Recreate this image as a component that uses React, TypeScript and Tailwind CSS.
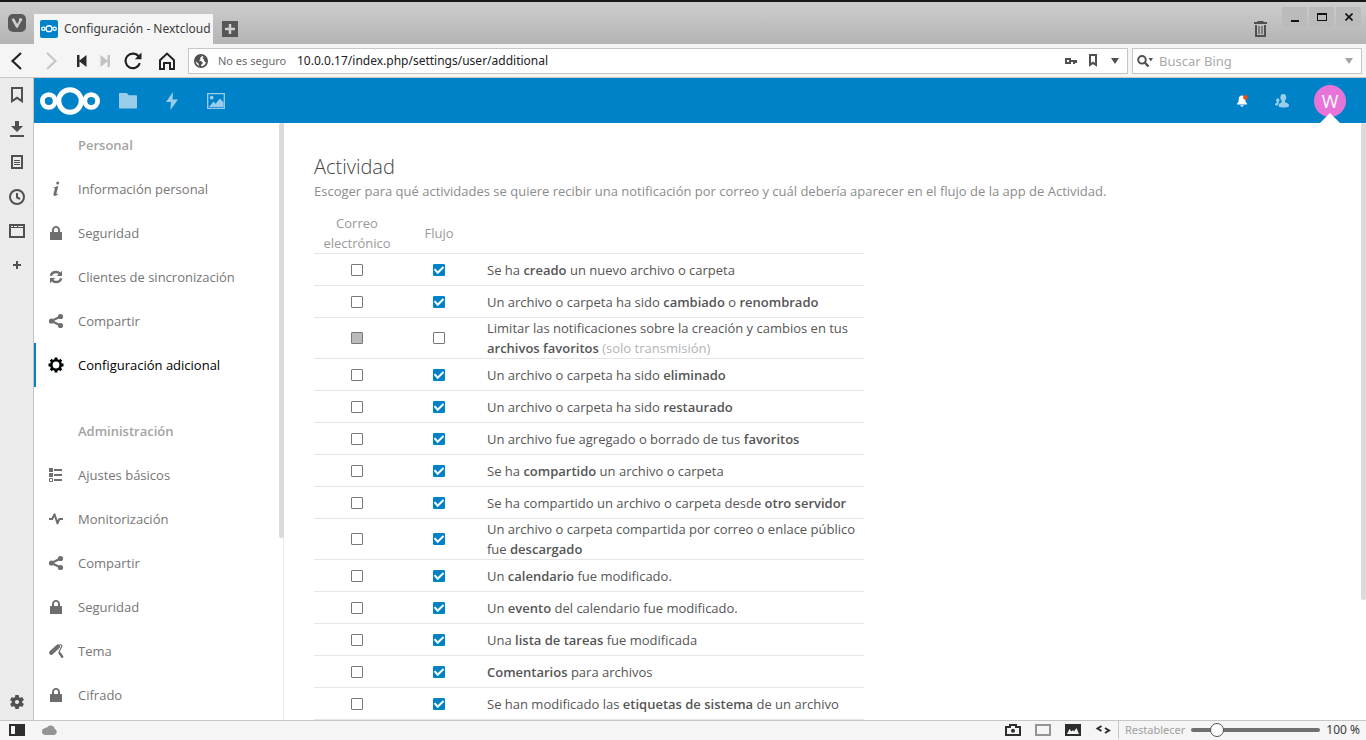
import React, { useState } from "react";

type IconProps = { className?: string };

function VivaldiIcon() {
  return (
    <svg className="size-[18px]" viewBox="0 0 18 18">
      <rect width="18" height="18" rx="5" fill="#5a5a5a" />
      <path d="M5.200 5.600 9 12.400" stroke="#cfcfcf" strokeWidth="2.600" strokeLinecap="round" />
      <path d="M9 12.400 12.200 7" stroke="#cfcfcf" strokeWidth="2.200" strokeLinecap="round" />
      <circle cx="12.600" cy="5.800" r="1.700" fill="#cfcfcf" />
    </svg>
  );
}

function NextcloudLogo({ className }: IconProps) {
  return (
    <svg className={className} viewBox="0 0 60 28" fill="none" stroke="#fff">
      <circle cx="30" cy="14" r="11.2" strokeWidth="5" />
      <circle cx="8.800" cy="14" r="6.400" strokeWidth="4.800" />
      <circle cx="51.200" cy="14" r="6.400" strokeWidth="4.800" />
    </svg>
  );
}

function BackIcon() {
  return (
    <svg className="size-[18px]" viewBox="0 0 18 18" fill="none" stroke="#222" strokeWidth="2.2">
      <path d="M13 1 4.5 9l8.5 8" />
    </svg>
  );
}
function ForwardIcon() {
  return (
    <svg className="size-[18px]" viewBox="0 0 18 18" fill="none" stroke="#c6c6c6" strokeWidth="2.2">
      <path d="m5 1 8.500 8L5 17" />
    </svg>
  );
}
function RewindIcon() {
  return (
    <svg className="h-3 w-[10px]" viewBox="0 0 10 12" fill="#2a2a2a">
      <path d="M0 0h2.500v5.500L9.500 0v12L2.500 6.500V12H0z" />
    </svg>
  );
}
function FastForwardIcon() {
  return (
    <svg className="h-3 w-[10px]" viewBox="0 0 10 12" fill="#c2c2c2">
      <path d="M10 0H7.500v5.500L.5 0v12l7-5.500V12H10z" />
    </svg>
  );
}
function ReloadIcon() {
  return (
    <svg className="size-[18px]" viewBox="0 0 18 18" fill="none">
      <path d="M15.800 11.200A7.300 7.300 0 1 1 14.600 4.300" stroke="#222" strokeWidth="2.200" />
      <path d="M17.500.5v6.700h-6.700z" fill="#222" />
    </svg>
  );
}
function HomeIcon() {
  return (
    <svg className="size-[18px]" viewBox="0 0 18 18" fill="none" stroke="#222" strokeWidth="2">
      <path d="M2 17V8.200L9 1.600l7 6.600V17h-4v-6H6v6z" />
    </svg>
  );
}
function GlobeIcon() {
  return (
    <svg className="size-[14px]" viewBox="0 0 14 14">
      <circle cx="7" cy="7" r="6.100" fill="#fff" stroke="#505050" strokeWidth="1.800" />
      <path fill="#505050" d="M1 5.500 3.500 2 7 1.200l.8 1.500L5.800 4l1 1.200L4.800 6.600l2.600.6 1.600 1.900-1.600 1.500-.6 2.600-1.600-1-.8-2.700L1.500 7zM9.500 2.200 12.600 5l.4 3-1.600.3L10 6.800 9.800 5l-1.300-.8z" />
    </svg>
  );
}
function KeyIcon() {
  return (
    <svg className="h-2 w-3" viewBox="0 0 12 8" fill="none" stroke="#505050" strokeWidth="2">
      <path d="M1 2h4v4H1zM5 4h7M9 4v3M11 4v2" />
    </svg>
  );
}
function RibbonIcon({ className }: IconProps) {
  return (
    <svg className={className} viewBox="0 0 12 16" fill="none" stroke="#505050" strokeWidth="2">
      <path d="M1 1h10v13.200L6 10.800l-5 3.400z" />
    </svg>
  );
}
function SmallRibbonIcon() {
  return (
    <svg className="h-[13px] w-2" viewBox="0 0 8 13" fill="none" stroke="#505050" strokeWidth="2">
      <path d="M1 1h6v9.800L4 8.800l-3 2z" />
    </svg>
  );
}
function DownTriangle({ className }: IconProps) {
  return (
    <svg className={className} viewBox="0 0 8 6" fill="currentColor">
      <path d="M0 0h8L4 6z" />
    </svg>
  );
}
function MagnifierIcon() {
  return (
    <svg className="h-3 w-4" viewBox="0 0 16 12" fill="none">
      <circle cx="5" cy="4.800" r="3.800" stroke="#505050" strokeWidth="2" />
      <path d="m7.800 7.500 3.700 4" stroke="#505050" strokeWidth="2.400" />
      <path d="M11.500 3H16l-2.250 3.500z" fill="#505050" />
    </svg>
  );
}
function TrashIcon() {
  return (
    <svg className="h-4 w-[13px]" viewBox="0 0 13 16">
      <path fill="#505050" d="M3.500 0h6v1H13v2H0V1h3.500z" />
      <path fill="none" stroke="#505050" strokeWidth="2" d="M2 4v11h9V4" />
      <path fill="none" stroke="#6b6b6b" strokeWidth="1.500" d="M5 5v8M8 5v8" />
    </svg>
  );
}

function DownloadIcon() {
  return (
    <svg className="size-4" viewBox="0 0 16 16" fill="#505050">
      <path d="M6 0h4v5h4L8 11 2 5h4zM1 14h14v2H1z" />
    </svg>
  );
}
function NotesIcon() {
  return (
    <svg className="size-4" viewBox="0 0 16 16" fill="none" stroke="#505050">
      <path strokeWidth="2" d="M3 1h10v12H3z" />
      <path d="M2 1.500h12M5 5.500h6M5 7.500h6M5 9.500h6" />
    </svg>
  );
}
function ClockIcon() {
  return (
    <svg className="size-4" viewBox="0 0 16 16" fill="none" stroke="#505050" strokeWidth="2">
      <circle cx="8" cy="8" r="7" />
      <path d="M8 4v4.500l3 1.500" />
    </svg>
  );
}
function WindowIcon() {
  return (
    <svg className="size-4" viewBox="0 0 16 16" fill="none" stroke="#505050">
      <path strokeWidth="2" d="M1 2h14v12H1z" />
      <path d="M1 4.500h14M4.500 2v2M8.500 2v2" />
    </svg>
  );
}
function PlusIcon({ className }: IconProps) {
  return (
    <svg className={className} viewBox="0 0 8 8" fill="none" stroke="currentColor" strokeWidth="2">
      <path d="M4 0v8M0 4h8" />
    </svg>
  );
}
function CogIcon() {
  return (
    <svg className="size-[14px]" viewBox="2 2 20 20" fill="#505050">
      <path d="M19.430 12.980c.04-.32.07-.64.07-.98s-.03-.66-.07-.98l2.110-1.650c.19-.15.24-.42.12-.64l-2-3.460c-.12-.22-.39-.3-.61-.22l-2.490 1c-.52-.4-1.080-.73-1.690-.98l-.38-2.650C14.460 2.180 14.250 2 14 2h-4c-.25 0-.46.18-.49.42l-.38 2.650c-.61.25-1.170.59-1.690.98l-2.490-1c-.23-.09-.49 0-.61.22l-2 3.460c-.13.22-.07.49.12.64l2.110 1.650c-.04.32-.07.65-.07.98s.03.66.07.98l-2.110 1.650c-.19.15-.24.42-.12.64l2 3.460c.12.22.39.3.61.22l2.490-1c.52.4 1.080.73 1.690.98l.38 2.650c.03.24.24.42.49.42h4c.25 0 .46-.18.49-.42l.38-2.650c.61-.25 1.170-.59 1.690-.98l2.490 1c.23.09.49 0 .61-.22l2-3.460c.12-.22.07-.49-.12-.64zM12 15a3 3 0 1 1 0-6 3 3 0 0 1 0 6z" />
    </svg>
  );
}

function FolderIcon() {
  return (
    <svg className="h-4 w-[18px]" viewBox="0 0 18 16" fill="#99cdea">
      <path d="M.6 0h7.200l2 2.200h7.600q.6 0 .6.600v12q0 .7-.7.700H.7q-.7 0-.7-.7V.6Q0 0 .6 0z" />
    </svg>
  );
}
function BoltIcon() {
  return (
    <svg className="h-[18px] w-3" viewBox="0 0 12 18" fill="#99cdea">
      <path d="M7 0 0 10h5l-.6 8L12 7.500H6.600z" />
    </svg>
  );
}
function GalleryIcon() {
  return (
    <svg className="h-4 w-[18px]" viewBox="0 0 18 16">
      <path fill="none" stroke="#99cdea" strokeWidth="1.300" d="M.7.700h16.600v14.600H.7z" />
      <circle cx="4.700" cy="4.600" r="1.900" fill="#99cdea" />
      <path fill="#99cdea" d="m2 14 4.500-5.500 2 2.300L13 5.500l3.500 4V14z" />
    </svg>
  );
}
function BellIcon() {
  return (
    <svg className="h-3 w-[11px]" viewBox="0 0 11 12">
      <path fill="#fff" d="M5 .5c2 0 3.300 1.400 3.300 3.300 0 3 .5 4 1.700 4.700v1H0v-1C1.200 7.800 1.700 6.800 1.700 3.800 1.700 2 3 .5 5 .5zM3.200 10.300h3.600c-.3 1.900-3.300 1.900-3.600 0z" />
      <circle cx="8.400" cy="2.400" r="2.300" fill="#eb4b16" />
    </svg>
  );
}
function ContactsIcon() {
  return (
    <svg className="h-[14px] w-[14px]" viewBox="0 0 14 14" fill="#99cdea">
      <ellipse cx="8.300" cy="3.400" rx="2.900" ry="3.400" />
      <path d="M6.600 5.500h3.400v2.700l3 1.300c1 .6 1.200 2.600.6 3.200-1 .9-8.700.9-9.600 0-.6-.6-.4-2.600.6-3.200l2-1.300z" />
      <ellipse cx="2.800" cy="6.300" rx="1.600" ry="2" />
      <path d="M2 7.500h1.800v1.400l.2.200c-.7.600-.9 1.600-.9 2.400-1.300 0-2.600-.1-3-.5-.3-.7 0-1.500.5-1.800L2 8.600z" />
    </svg>
  );
}

type NavIconName = "info" | "lock" | "sync" | "share" | "gear" | "list" | "pulse" | "theme";

function NavIcon({ name }: { name: NavIconName }) {
  if (name === "info")
    return (
      <svg className="size-4" viewBox="0 0 16 16" fill="#6e6e6e">
        <circle cx="9.700" cy="2" r="1.500" />
        <path d="M5.600 6.500Q7.800 5.700 10.400 4.800L8.400 12.800q-.1.900 1.800-.2l.1.700Q6 16.200 5.300 13.800L6.900 7.500q-.2-.8-1.500-.3z" />
      </svg>
    );
  if (name === "lock")
    return (
      <svg className="size-4" viewBox="0 0 16 16" fill="#6e6e6e">
        <path d="M8 1C5.700 1 4 2.800 4 5v2H2.700c-.4 0-.7.300-.7.700V15h12V7.700c0-.4-.3-.7-.7-.7H12V5c0-2.200-1.700-4-4-4zm0 1.800c1.200 0 2 1 2 2.200v2H6V5c0-1.200.8-2.200 2-2.200z" />
      </svg>
    );
  if (name === "sync")
    return (
      <svg className="size-4" viewBox="0 0 16 16">
        <path fill="none" stroke="#6e6e6e" strokeWidth="2.400" d="M2.800 6.800C3.400 4.500 5.500 3 8 3c1.700 0 3 .7 4 1.800M13.200 9.200C12.600 11.500 10.500 13 8 13c-1.700 0-3-.7-4-1.800" />
        <path fill="#6e6e6e" d="M14 1.800V7H8.800zM2 14.200V9h5.200z" />
      </svg>
    );
  if (name === "share")
    return (
      <svg className="size-4" viewBox="0 0 16 16">
        <g fill="#6e6e6e">
          <circle cx="12.500" cy="3.500" r="2.600" />
          <circle cx="3.500" cy="8" r="2.600" />
          <circle cx="12.500" cy="12.500" r="2.600" />
        </g>
        <path fill="none" stroke="#6e6e6e" strokeWidth="2.200" d="M12.500 3.500 3.500 8l9 4.500" />
      </svg>
    );
  if (name === "gear")
    return (
      <svg className="size-4" viewBox="0 0 16 16" fill="none" stroke="#000">
        <circle cx="8" cy="8" r="4.700" strokeWidth="2.600" />
        <path strokeWidth="2.800" d="M8 .5v2.500M8 13v2.500M.5 8H3M13 8h2.500M2.700 2.700l1.800 1.800M11.500 11.500l1.800 1.800M2.700 13.300l1.800-1.800M11.500 4.500l1.800-1.800" />
      </svg>
    );
  if (name === "list")
    return (
      <svg className="size-4" viewBox="0 0 16 16" fill="#6e6e6e">
        <path d="M1 1h4v4H1zM6 2h8v2H6zM1 6h4v4H1zM6 7h8v2H6zM6 12h8v2H6z" />
        <path fill="none" stroke="#6e6e6e" d="M1.500 11.500h3v3h-3z" />
      </svg>
    );
  if (name === "pulse")
    return (
      <svg className="size-4" viewBox="0 0 16 16" fill="none" stroke="#6e6e6e" strokeWidth="2" strokeLinejoin="round">
        <path d="M1 8h3.200l2.300-4.800 3 9.200L11.300 8H15" />
      </svg>
    );
  return (
    <svg className="size-4" viewBox="0 0 16 16" fill="none" stroke="#6e6e6e">
      <path strokeWidth="4.400" strokeLinecap="round" d="M3.300 9.700 10 3.500" />
      <path strokeWidth="1.200" d="M11.500 1.500c3 0 2.500 2 1.500 3.500s-2 3-1.500 4.500" />
      <path strokeWidth="2.400" strokeLinecap="round" d="m11.500 10 2.700 3.800" />
    </svg>
  );
}

type NavEntry = { label: string; icon: NavIconName; active?: boolean };

const personal: NavEntry[] = [
  { label: "Información personal", icon: "info" },
  { label: "Seguridad", icon: "lock" },
  { label: "Clientes de sincronización", icon: "sync" },
  { label: "Compartir", icon: "share" },
  { label: "Configuración adicional", icon: "gear", active: true },
];

const administration: NavEntry[] = [
  { label: "Ajustes básicos", icon: "list" },
  { label: "Monitorización", icon: "pulse" },
  { label: "Compartir", icon: "share" },
  { label: "Seguridad", icon: "lock" },
  { label: "Tema", icon: "theme" },
  { label: "Cifrado", icon: "lock" },
];

function NavSection({ title, entries }: { title: string; entries: NavEntry[] }) {
  return (
    <section>
      <h2 className="h-11 pl-11 leading-[44px] font-semibold text-[#a3a3a3]">{title}</h2>
      <ul>
        {entries.map((entry) => (
          <li key={entry.label}>
            <a
              href="#"
              className={
                entry.active
                  ? "flex h-11 items-center border-l-2 border-[#0082c9] pl-3 text-black"
                  : "flex h-11 items-center border-l-2 border-transparent pl-3 text-[#767676]"
              }
            >
              <span className="w-[30px] shrink-0">
                <NavIcon name={entry.icon} />
              </span>
              {entry.label}
            </a>
          </li>
        ))}
      </ul>
    </section>
  );
}

type Activity = { name: string; text: React.ReactNode; mail?: "disabled"; stream: boolean };

const activities: Activity[] = [
  { name: "creado", text: <>Se ha <strong>creado</strong> un nuevo archivo o carpeta</>, stream: true },
  { name: "cambiado", text: <>Un archivo o carpeta ha sido <strong>cambiado</strong> o <strong>renombrado</strong></>, stream: true },
  {
    name: "favoritos-limite",
    text: <>Limitar las notificaciones sobre la creación y cambios en tus <strong>archivos favoritos</strong> <span className="text-[#b3b3b3]">(solo transmisión)</span></>,
    mail: "disabled",
    stream: false,
  },
  { name: "eliminado", text: <>Un archivo o carpeta ha sido <strong>eliminado</strong></>, stream: true },
  { name: "restaurado", text: <>Un archivo o carpeta ha sido <strong>restaurado</strong></>, stream: true },
  { name: "favoritos", text: <>Un archivo fue agregado o borrado de tus <strong>favoritos</strong></>, stream: true },
  { name: "compartido", text: <>Se ha <strong>compartido</strong> un archivo o carpeta</>, stream: true },
  { name: "servidor", text: <>Se ha compartido un archivo o carpeta desde <strong>otro servidor</strong></>, stream: true },
  { name: "descargado", text: <>Un archivo o carpeta compartida por correo o enlace público fue <strong>descargado</strong></>, stream: true },
  { name: "calendario", text: <>Un <strong>calendario</strong> fue modificado.</>, stream: true },
  { name: "evento", text: <>Un <strong>evento</strong> del calendario fue modificado.</>, stream: true },
  { name: "tareas", text: <>Una <strong>lista de tareas</strong> fue modificada</>, stream: true },
  { name: "comentarios", text: <><strong>Comentarios</strong> para archivos</>, stream: true },
  { name: "etiquetas", text: <>Se han modificado las <strong>etiquetas de sistema</strong> de un archivo</>, stream: true },
];

function Tick({ labelledBy, initial, disabled }: { labelledBy: string; initial: boolean; disabled?: boolean }) {
  const [checked, setChecked] = useState(initial);
  return (
    <span className="mx-auto grid size-3">
      <input
        type="checkbox"
        aria-labelledby={labelledBy}
        disabled={disabled}
        checked={checked}
        onChange={(e) => setChecked(e.target.checked)}
        className="col-start-1 row-start-1 size-3 appearance-none rounded-[1px] border border-[#787878] bg-white checked:border-[#0082c9] checked:bg-[#0082c9] disabled:bg-[#bababa]"
      />
      {checked && (
        <svg className="pointer-events-none col-start-1 row-start-1 size-3" viewBox="0 0 12 12" fill="none" stroke="#fff" strokeWidth="2">
          <path d="m1.500 5.200 3.200 3.500L10.500 3" />
        </svg>
      )}
    </span>
  );
}

function ActivityTable() {
  return (
    <table className="w-[550px] table-fixed border-separate border-spacing-0 text-[#555] [&_strong]:font-semibold [&_td]:border-b [&_td]:border-[#e6e6e6] [&_th]:border-b [&_th]:border-[#e6e6e6]">
      <colgroup>
        <col className="w-[86px]" />
        <col className="w-[78px]" />
        <col />
      </colgroup>
      <thead>
        <tr className="font-normal text-[#999]">
          <th id="col-mail" className="px-2 font-normal">Correo electrónico</th>
          <th id="col-stream" className="font-normal">Flujo</th>
          <th />
        </tr>
      </thead>
      <tbody>
        {activities.map((a) => (
          <tr key={a.name} className="h-8">
            <td><Tick labelledBy={"col-mail act-" + a.name} initial={false} disabled={a.mail === "disabled"} /></td>
            <td><Tick labelledBy={"col-stream act-" + a.name} initial={a.stream} /></td>
            <td id={"act-" + a.name} className="pl-[9px]">{a.text}</td>
          </tr>
        ))}
      </tbody>
    </table>
  );
}

function TabStrip() {
  return (
    <div className="flex h-11 shrink-0 border-t-2 border-[#15191c] bg-linear-to-b from-[#cdcdcd] to-[#b4b4b4]">
      <button aria-label="Menú" className="mt-3 ml-2 h-[18px]"><VivaldiIcon /></button>
      <div className="mt-3 ml-2 flex w-[179px] items-center bg-[#f5f5f5] pl-[6px]">
        <span className="flex size-[18px] shrink-0 items-center justify-center rounded-[2px] bg-[#0082c9]">
          <NextcloudLogo className="w-4" />
        </span>
        <span className="ml-[6px] text-[12px] whitespace-nowrap text-[#3c3c3c]">Configuración - Nextcloud</span>
      </div>
      <button aria-label="Nueva pestaña" className="mt-[19px] ml-[9px] flex size-4 items-center justify-center bg-[#565656] text-[#d0d0d0]">
        <PlusIcon className="size-[10px]" />
      </button>
      <div className="flex-1" />
      <button aria-label="Papelera" className="mt-[19px] mr-[15px] h-4"><TrashIcon /></button>
      <div className="mt-[5px] mr-[5px] flex gap-[2px]">
        <button aria-label="Minimizar" className="flex h-5 w-[25px] items-center justify-center bg-[#bbb]">
          <svg className="h-3 w-[10px]" viewBox="0 0 10 12" fill="#111"><path d="M1 9h8v2H1z" /></svg>
        </button>
        <button aria-label="Maximizar" className="flex h-5 w-[25px] items-center justify-center bg-[#bbb]">
          <svg className="h-2 w-[10px]" viewBox="0 0 10 8"><path fill="#111" fillRule="evenodd" d="M0 0h10v8H0zM1 2h8v5H1z" /></svg>
        </button>
        <button aria-label="Cerrar" className="flex h-5 w-[25px] items-center justify-center bg-[#bbb]">
          <svg className="size-2" viewBox="0 0 8 8" stroke="#111" strokeWidth="1.600"><path d="m.5.500 7 7M7.500.5l-7 7" /></svg>
        </button>
      </div>
    </div>
  );
}

function AddressBar() {
  return (
    <div className="flex h-[34px] shrink-0 items-center border-b border-[#c6c6c6] bg-[#f5f5f5] pr-1">
      <button aria-label="Atrás" className="flex w-[34px] justify-center"><BackIcon /></button>
      <button aria-label="Adelante" className="flex w-[34px] justify-center"><ForwardIcon /></button>
      <button aria-label="Rebobinar" className="flex w-[27px] justify-center"><RewindIcon /></button>
      <button aria-label="Avance rápido" className="flex w-5 justify-center"><FastForwardIcon /></button>
      <button aria-label="Recargar" className="flex w-9 justify-center"><ReloadIcon /></button>
      <button aria-label="Inicio" className="flex w-8 justify-center"><HomeIcon /></button>
      <div className="ml-[5px] flex h-[26px] flex-1 items-center border border-[#c6c6c6] bg-white pl-[5px]">
        <GlobeIcon />
        <span className="ml-[10px] w-[79px] shrink-0 text-[11px] whitespace-nowrap text-[#6a6a6a]">No es seguro</span>
        <input aria-label="Dirección" defaultValue="10.0.0.17/index.php/settings/user/additional" className="min-w-0 flex-1 bg-transparent text-[12px] text-[#222] outline-none" />
        <button aria-label="Contraseña" className="mr-3"><KeyIcon /></button>
        <button aria-label="Marcador" className="mr-[14px]"><SmallRibbonIcon /></button>
        <button aria-label="Historial" className="mr-2 text-[#505050]"><DownTriangle className="h-[6px] w-2" /></button>
      </div>
      <div className="ml-1 flex h-[26px] w-[230px] items-center border border-[#c6c6c6] bg-white pl-1">
        <button aria-label="Motor de búsqueda"><MagnifierIcon /></button>
        <input aria-label="Buscar" placeholder="Buscar Bing" className="ml-[6px] min-w-0 flex-1 bg-transparent text-[13px] outline-none placeholder:text-[#a9a9a9]" />
        <button aria-label="Opciones de búsqueda" className="mr-2 text-[#a5a5a5]"><DownTriangle className="h-[6px] w-2" /></button>
      </div>
    </div>
  );
}

function PanelBar() {
  return (
    <nav aria-label="Paneles" className="flex w-[34px] shrink-0 flex-col border-r border-[#c4c4c4] bg-[#ebebeb] pb-px text-[#505050] [&>button]:flex [&>button]:h-[34px] [&>button]:items-center [&>button]:justify-center">
      <button aria-label="Marcadores"><RibbonIcon className="h-4 w-3" /></button>
      <button aria-label="Descargas"><DownloadIcon /></button>
      <button aria-label="Notas"><NotesIcon /></button>
      <button aria-label="Historial"><ClockIcon /></button>
      <button aria-label="Ventanas"><WindowIcon /></button>
      <button aria-label="Añadir panel"><PlusIcon className="size-2" /></button>
      <button aria-label="Ajustes" className="mt-auto"><CogIcon /></button>
    </nav>
  );
}

function CloudHeader() {
  return (
    <header className="flex h-[45px] shrink-0 items-center bg-[#0082c9] pl-[6px]">
      <a href="#" aria-label="Nextcloud"><NextcloudLogo className="h-7 w-[60px]" /></a>
      <a href="#" aria-label="Archivos" className="ml-[6px] flex w-11 justify-center"><FolderIcon /></a>
      <a href="#" aria-label="Actividad" className="flex w-11 justify-center"><BoltIcon /></a>
      <a href="#" aria-label="Galería" className="flex w-11 justify-center"><GalleryIcon /></a>
      <div className="flex-1" />
      <button aria-label="Notificaciones" className="flex w-10 justify-center"><BellIcon /></button>
      <button aria-label="Contactos" className="flex w-10 justify-center"><ContactsIcon /></button>
      <button aria-label="Usuario W" className="relative mr-2 flex h-full w-14 items-center justify-center">
        <span className="flex size-8 items-center justify-center rounded-full bg-[#e774d8] text-[18px] text-white">W</span>
        <svg className="absolute bottom-0 h-[10px] w-5" viewBox="0 0 20 10" fill="#fff"><path d="M0 10 10 0l10 10z" /></svg>
      </button>
    </header>
  );
}

function StatusBar() {
  const [zoom, setZoom] = useState(100);
  return (
    <footer className="flex h-5 shrink-0 items-center border-t border-[#c6c6c6] bg-[#f5f5f5] pr-[6px] pb-px text-[12px]">
      <button aria-label="Alternar panel" className="ml-[9px]">
        <svg className="h-3 w-4" viewBox="0 0 16 12"><path fill="#2d2d2d" fillRule="evenodd" d="M0 0h16v12H0zM2 2h4v8H2z" /></svg>
      </button>
      <button aria-label="Sincronización" className="ml-4">
        <svg className="h-[10px] w-4" viewBox="0 0 16 10" fill="#949494"><path d="M4 10a3.400 3.400 0 0 1-.5-6.700 3 3 0 0 1 2.500-.9 4.300 4.300 0 0 1 7.800 1.500A3.200 3.200 0 0 1 13 10z" /></svg>
      </button>
      <div className="flex-1" />
      <div className="flex items-center gap-[14px]">
        <button aria-label="Captura">
          <svg className="h-3 w-4" viewBox="0 0 16 12"><path fill="#2d2d2d" fillRule="evenodd" d="M0 2h4V0h8v2h4v10H0zM2 4v6h12V4h-4V2H6v2z" /><circle cx="8" cy="6.800" r="2" fill="#2d2d2d" /></svg>
        </button>
        <button aria-label="Mosaico">
          <svg className="h-3 w-4" viewBox="0 0 16 12" fill="none" stroke="#949494" strokeWidth="2"><path d="M1 1h14v10H1z" /></svg>
        </button>
        <button aria-label="Imágenes">
          <svg className="h-3 w-4" viewBox="0 0 16 12"><path fill="#2d2d2d" d="M0 0h16v12H0z" /><path fill="#f5f5f5" d="m2 10 2.500-5 2 2.500L8 6l1 1.500L11.500 4 14 10z" /></svg>
        </button>
        <button aria-label="Acciones de página">
          <svg className="h-3 w-4" viewBox="0 0 16 12" fill="none" stroke="#2d2d2d" strokeWidth="2"><path d="M6.500 2 2.500 4.500l4 2.500M10 4l4 2.500L10 9" /></svg>
        </button>
      </div>
      <span className="ml-[7px] h-full w-px bg-[#c6c6c6]" />
      <button onClick={() => setZoom(100)} className="ml-[6px] text-[11px] text-[#a0a0a0]">Restablecer</button>
      <input
        type="range"
        aria-label="Zoom"
        min={20}
        max={500}
        value={zoom}
        onChange={(e) => setZoom(Number(e.target.value))}
        className="ml-[6px] h-[14px] w-[129px] appearance-none bg-transparent [&::-webkit-slider-runnable-track]:h-1 [&::-webkit-slider-runnable-track]:rounded-full [&::-webkit-slider-runnable-track]:bg-[#707070] [&::-webkit-slider-thumb]:-mt-[5px] [&::-webkit-slider-thumb]:size-[14px] [&::-webkit-slider-thumb]:appearance-none [&::-webkit-slider-thumb]:rounded-full [&::-webkit-slider-thumb]:border [&::-webkit-slider-thumb]:border-[#505050] [&::-webkit-slider-thumb]:bg-white"
      />
      <span className="ml-[6px] whitespace-nowrap text-[#3a3a3a]">{zoom} %</span>
    </footer>
  );
}

export default function App() {
  return (
    <div className="flex h-screen flex-col overflow-hidden bg-white font-['Noto_Sans',sans-serif] text-[13px] leading-5">
      <TabStrip />
      <AddressBar />
      <div className="flex min-h-0 flex-1">
        <PanelBar />
        <div className="flex min-w-0 flex-1 flex-col font-['Open_Sans',sans-serif]">
          <CloudHeader />
          <div className="flex min-h-0 flex-1">
            <aside className="relative w-[250px] shrink-0 border-r border-[#ebebeb]">
              <div className="h-full overflow-hidden">
                <NavSection title="Personal" entries={personal} />
                <div className="h-[22px]" />
                <NavSection title="Administración" entries={administration} />
              </div>
              <span className="absolute top-0 -right-px h-[415px] w-[5px] rounded-[2px] bg-[#dbdbdb]" />
            </aside>
            <main className="relative min-w-0 flex-1 overflow-hidden px-[30px] pt-8">
              <h1 className="text-[20px] leading-6 font-light text-[#444]">Actividad</h1>
              <p className="mt-[2px] mb-3 text-[#8c8c8c]">Escoger para qué actividades se quiere recibir una notificación por correo y cuál debería aparecer en el flujo de la app de Actividad.</p>
              <ActivityTable />
              <span className="absolute top-0 right-0 h-[477px] w-[5px] rounded-[2px] bg-[#dbdbdb]" />
            </main>
          </div>
        </div>
      </div>
      <StatusBar />
    </div>
  );
}
